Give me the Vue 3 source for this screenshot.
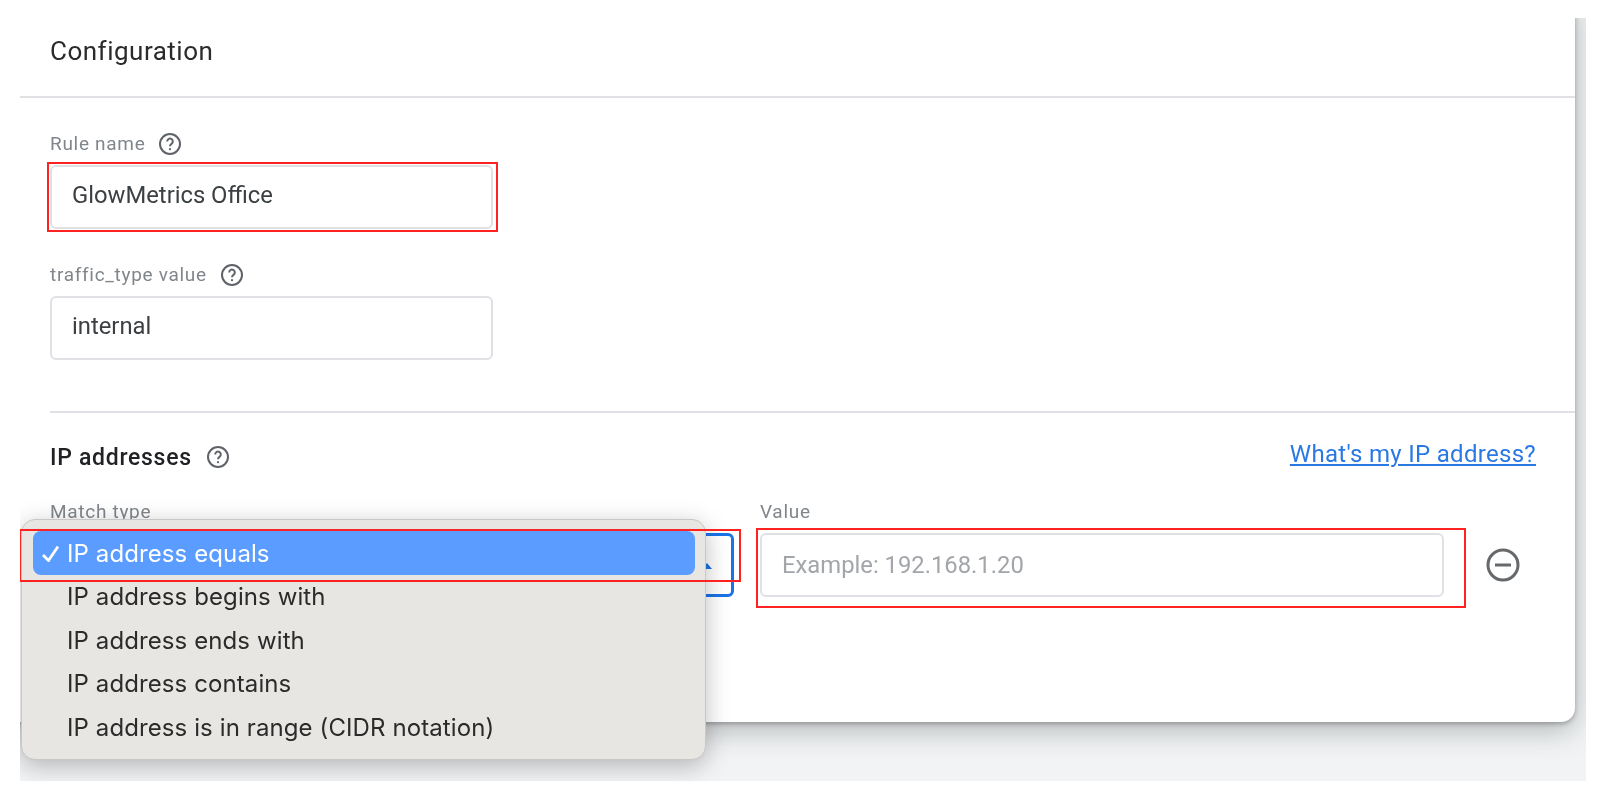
<script setup>
const options = [
  'IP address equals',
  'IP address begins with',
  'IP address ends with',
  'IP address contains',
  'IP address is in range (CIDR notation)'
]
</script>

<template>
  <div class="page">
    <div class="backdrop">
      <section class="card">
        <h1 class="title">Configuration</h1>
        <div class="body">
          <div class="label-row first">
            <span class="label">Rule name</span>
            <svg class="help" viewBox="0 0 24 24"><circle cx="12" cy="12" r="10" /><path d="M9.2 9.4a2.8 2.8 0 1 1 4.5 2.2c-1 .8-1.7 1.3-1.7 2.6" /><circle class="dot" cx="12" cy="17.2" r="1.1" /></svg>
          </div>
          <div class="input wide">
            <span>GlowMetrics Office</span>
            <div class="mark name-mark"></div>
          </div>
          <div class="label-row second">
            <span class="label">traffic_type value</span>
            <svg class="help" viewBox="0 0 24 24"><circle cx="12" cy="12" r="10" /><path d="M9.2 9.4a2.8 2.8 0 1 1 4.5 2.2c-1 .8-1.7 1.3-1.7 2.6" /><circle class="dot" cx="12" cy="17.2" r="1.1" /></svg>
          </div>
          <div class="input wide"><span>internal</span></div>
          <div class="rule"></div>
          <div class="ip-head">
            <div class="ip-title">
              <h2>IP addresses</h2>
              <svg class="help" viewBox="0 0 24 24"><circle cx="12" cy="12" r="10" /><path d="M9.2 9.4a2.8 2.8 0 1 1 4.5 2.2c-1 .8-1.7 1.3-1.7 2.6" /><circle class="dot" cx="12" cy="17.2" r="1.1" /></svg>
            </div>
            <a class="link" href="#">What's my IP address?</a>
          </div>
          <div class="ip-row">
            <div class="match">
              <span class="label">Match type</span>
              <div class="select"><i class="arrow"></i></div>
              <ul class="menu">
                <li v-for="(o, i) in options" :key="o" :class="{ on: i === 0 }">
                  <span class="check">
                    <svg v-if="i === 0" viewBox="0 0 17 17"><path d="M1 10l5.5 5.5L16 1.500" /></svg>
                  </span>{{ o }}
                </li>
              </ul>
              <div class="mark match-mark"></div>
            </div>
            <div class="value">
              <span class="label">Value</span>
              <div class="input full plain">
                <span class="ph">Example: 192.168.1.20</span>
                <div class="mark value-mark"></div>
              </div>
            </div>
            <svg class="remove" viewBox="0 0 34 34"><circle cx="17" cy="17" r="15" /><path d="M9 17h16" /></svg>
          </div>
        </div>
      </section>
    </div>
  </div>
</template>

<style>
html, body { margin: 0; background: #fff; }
</style>

<style scoped>
.page { width: 1600px; height: 805px; overflow: hidden; font-family: Roboto, "Liberation Sans", sans-serif; padding: 18px 0 0 20px; box-sizing: border-box; filter: blur(0.35px); }
.backdrop { width: 1566px; height: 763px; background: #f1f3f4; overflow: hidden; }
.card { width: 1575px; height: 724px; margin: -20px 0 0 -20px; background: #fff; border-radius: 0 0 14px 0; box-shadow: 0 2px 4px rgba(60,64,67,.34), 0 8px 28px rgba(60,64,67,.34); display: flex; flex-direction: column; }
.title { margin: 0; height: 100px; box-sizing: border-box; border-bottom: 2px solid #dfe1e5; padding: 37px 0 0 50px; font-weight: 400; font-size: 26px; line-height: 32px; letter-spacing: .5px; color: #2b2b2b; }
.body { padding-left: 50px; display: flex; flex-direction: column; }
.label-row { display: flex; align-items: center; gap: 13px; height: 24px; }
.label-row.first { margin-top: 34px; }
.label-row.second { margin-top: 34px; }
.label { font-size: 19px; line-height: 24px; color: #80868b; letter-spacing: .7px; }
.help { width: 24px; height: 24px; fill: none; stroke: #5f6368; stroke-width: 2; }
.help .dot { fill: #5f6368; stroke: none; }
.input { box-sizing: border-box; height: 64px; border: 2px solid #dfe1e5; border-radius: 6px; display: flex; align-items: center; padding: 0 0 4px 20px; font-size: 23.8px; color: #3c4043; position: relative; margin-top: 9px; background: #fff; }
.input.plain { padding-bottom: 0; }
.wide { width: 443px; }
.full { width: 684px; }
.ph { color: #a2a5a9; }
.rule { height: 2px; background: #dfe1e5; margin-top: 51px; }
.ip-head { display: flex; justify-content: space-between; height: 87px; padding-right: 39px; }
.ip-title { display: flex; align-items: center; gap: 14px; height: 24px; margin-top: 32px; }
.ip-title h2 { margin: 0; font-size: 23px; font-weight: 500; letter-spacing: .7px; color: #202124; }
.link { margin-top: 26px; height: 30px; font-size: 24px; line-height: 30px; letter-spacing: .3px; color: #2a78e4; }
.ip-row { display: flex; }
.match { width: 710px; position: relative; }
.select { box-sizing: border-box; width: 684px; height: 64px; margin-top: 9px; border: 3px solid #1a73e8; border-radius: 6px; position: relative; }
.arrow { position: absolute; right: 19px; top: 27px; border: 5px solid transparent; border-top: 0; border-bottom: 6px solid #1a73e8; }
.menu { position: absolute; left: -29px; top: 19px; width: 685px; height: 241px; box-sizing: border-box; margin: 0; padding: 11px 10px 11px 11px; list-style: none; background: #e8e6e3; border: 1px solid #c9c8c6; border-radius: 14px; box-shadow: 0 6px 24px rgba(0,0,0,.26); font-family: Inter, sans-serif; font-size: 24px; letter-spacing: .1px; color: #2b2b2b; }
.menu li { height: 43.5px; display: flex; align-items: center; border-radius: 8px; }
.menu li.on { background: #5a9cff; color: #fff; height: 44px; }
.check { width: 34px; flex: none; display: flex; padding-left: 9px; box-sizing: border-box; }
.check svg { width: 17px; height: 17px; fill: none; stroke: #fff; stroke-width: 2.8; }
.mark { position: absolute; border: 2px solid #f22; box-sizing: border-box; }
.name-mark { left: -5px; top: -5px; width: 451px; height: 70px; }
.match-mark { left: -31px; top: 29px; width: 722px; height: 53px; }
.value-mark { left: -6px; top: -7px; width: 710px; height: 80px; }
.value { width: 684px; }
.remove { width: 34px; height: 34px; fill: none; stroke: #66696c; stroke-width: 3; margin: 48px 0 0 42px; }
</style>
